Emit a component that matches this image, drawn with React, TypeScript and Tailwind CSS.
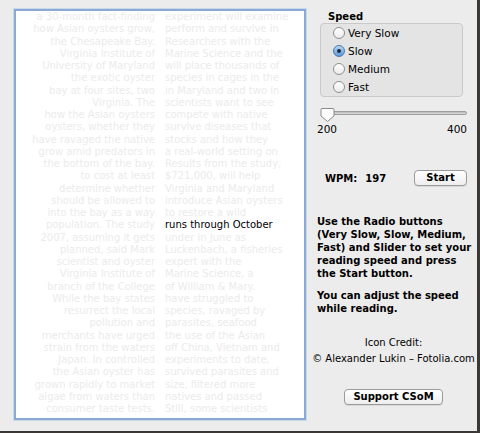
import { useState } from 'react';

const LEFT_LINES = [
  'a 30-month fact-finding',
  'how Asian oysters grow,',
  'the Chesapeake Bay.',
  'Virginia Institute of',
  'University of Maryland',
  'the exotic oyster',
  'bay at four sites, two',
  'Virginia. The',
  'how the Asian oysters',
  'oysters, whether they',
  'have ravaged the native',
  'grow amid predators in',
  'the bottom of the bay.',
  'to cost at least',
  'determine whether',
  'should be allowed to',
  'into the bay as a way',
  'population. The study',
  '2007, assuming it gets',
  'planned, said Mark',
  'scientist and oyster',
  'Virginia Institute of',
  'branch of the College',
  'While the bay states',
  'resurrect the local',
  'pollution and',
  'merchants have urged',
  'strain from the waters',
  'Japan. In controlled',
  'the Asian oyster has',
  'grown rapidly to market',
  'algae from waters than',
  'consumer taste tests.',
];

const RIGHT_LINES = [
  'experiment will examine',
  'perform and survive in',
  'Researchers with the',
  'Marine Science and the',
  'will place thousands of',
  'species in cages in the',
  'in Maryland and two in',
  'scientists want to see',
  'compete with native',
  'survive diseases that',
  'stocks and how they',
  'a real-world setting on',
  'Results from the study,',
  '$721,000, will help',
  'Virginia and Maryland',
  'introduce Asian oysters',
  'to restore a wild',
  'runs through October',
  'under in June as',
  'Luckenbach, a fisheries',
  'expert with the',
  'Marine Science, a',
  'of William & Mary.',
  'have struggled to',
  'species, ravaged by',
  'parasites, seafood',
  'the use of the Asian',
  'off China, Vietnam and',
  'experiments to date,',
  'survived parasites and',
  'size, filtered more',
  'natives and passed',
  'Still, some scientists',
];

const ACTIVE_LINE = 17;

const SPEEDS = ['Very Slow', 'Slow', 'Medium', 'Fast'];

function Radio({ checked }: { checked: boolean }) {
  if (checked) {
    return (
      <span className="flex items-center justify-center w-[12px] h-[12px] rounded-full border border-[#4a78b0] bg-gradient-to-b from-[#b9d6f3] to-[#5d9ad9] shrink-0">
        <span className="w-[4px] h-[4px] rounded-full bg-[#1b2a40]" />
      </span>
    );
  }
  return (
    <span className="w-[12px] h-[12px] rounded-full border border-[#8f8f8f] bg-gradient-to-b from-white to-[#ebebeb] shrink-0" />
  );
}

function AquaButton({ label, className }: { label: string; className: string }) {
  return (
    <button
      className={`flex items-center justify-center h-[16px] rounded-[4px] border border-[#9b9b9b] bg-gradient-to-b from-white to-[#eeeeee] shadow-[0_1px_0_#d8d8d8] text-[10px] font-bold text-black leading-none ${className}`}
    >
      {label}
    </button>
  );
}

function App() {
  const [speed, setSpeed] = useState('Slow');

  return (
    <div className="w-[480px] h-[433px] bg-[#3b3836] overflow-hidden font-['DejaVu_Sans',sans-serif]">
      <div className="flex w-[477px] h-[431px] bg-[#ececec]">
        {/* Reading pane */}
        <div className="ml-[14px] mt-[9px] w-[292px] h-[411px] bg-white border-2 border-[#88aad4] shadow-[0_0_0_1px_#c9d8ea] overflow-hidden">
          <div className="grid grid-cols-2 text-[10px] leading-[12.25px] text-[#ebebeb] whitespace-nowrap">
            <div className="flex flex-col items-end pr-[5px]">
              {LEFT_LINES.map((line, i) => (
                <span key={i}>{line}</span>
              ))}
            </div>
            <div className="flex flex-col items-start pl-[5px]">
              {RIGHT_LINES.map((line, i) => (
                <span key={i} className={i === ACTIVE_LINE ? 'text-black' : ''}>
                  {line}
                </span>
              ))}
            </div>
          </div>
        </div>

        {/* Controls */}
        <div className="ml-[11px] w-[153px] flex flex-col text-[10px] text-black">
          <div className="pt-[10px] pl-[11px] font-bold leading-[13px]">Speed</div>
          <div className="ml-[3px] w-[143px] h-[74px] rounded-[4px] border border-[#c9c9c9] bg-[#e4e4e4] flex flex-col">
            {SPEEDS.map((s) => (
              <label
                key={s}
                onClick={() => setSpeed(s)}
                className="flex items-center h-[18px] pl-[12px] gap-[3px] leading-none cursor-default text-[10.5px]"
              >
                <Radio checked={speed === s} />
                <span>{s}</span>
              </label>
            ))}
          </div>

          <div className="relative ml-[5px] mt-[8px] w-[145px] h-[18px]">
            <div className="absolute left-0 right-0 top-[6px] h-[4px] rounded-full border border-[#9d9d9d] bg-gradient-to-b from-[#b9b9b9] to-[#dddddd]" />
            <svg className="absolute left-[-2px] top-[2px]" width="15" height="16" viewBox="0 0 15 16">
              <path
                d="M2 1.5 H13 Q14 1.5 14 2.5 V9 L7.5 14.5 L1 9 V2.5 Q1 1.5 2 1.5 Z"
                fill="#fbfbfb"
                stroke="#8c8c8c"
                strokeWidth="1"
              />
            </svg>
          </div>
          <div className="flex justify-between w-[150px] leading-[13px] text-[10.5px]">
            <span>200</span>
            <span>400</span>
          </div>

          <div className="flex items-center justify-between mt-[34px] h-[16px] pl-[8px] pr-[3px]">
            <div className="flex gap-[8px] font-bold">
              <span>WPM:</span>
              <span>197</span>
            </div>
            <AquaButton label="Start" className="w-[53px]" />
          </div>

          <p className="mt-[29px] font-bold leading-[13px] whitespace-nowrap">
            Use the Radio buttons
            <br />
            (Very Slow, Slow, Medium,
            <br />
            Fast) and Slider to set your
            <br />
            reading speed and press
            <br />
            the Start button.
          </p>
          <p className="mt-[9px] font-bold leading-[13px] whitespace-nowrap">
            You can adjust the speed
            <br />
            while reading.
          </p>

          <div className="mt-[20px] -mx-[6px] text-center leading-[16px] whitespace-nowrap">
            <div>Icon Credit:</div>
            <div>© Alexander Lukin – Fotolia.com</div>
          </div>

          <div className="flex justify-center mt-[22px]">
            <AquaButton label="Support CSoM" className="w-[99px]" />
          </div>
        </div>
      </div>
    </div>
  );
}

export default App;
